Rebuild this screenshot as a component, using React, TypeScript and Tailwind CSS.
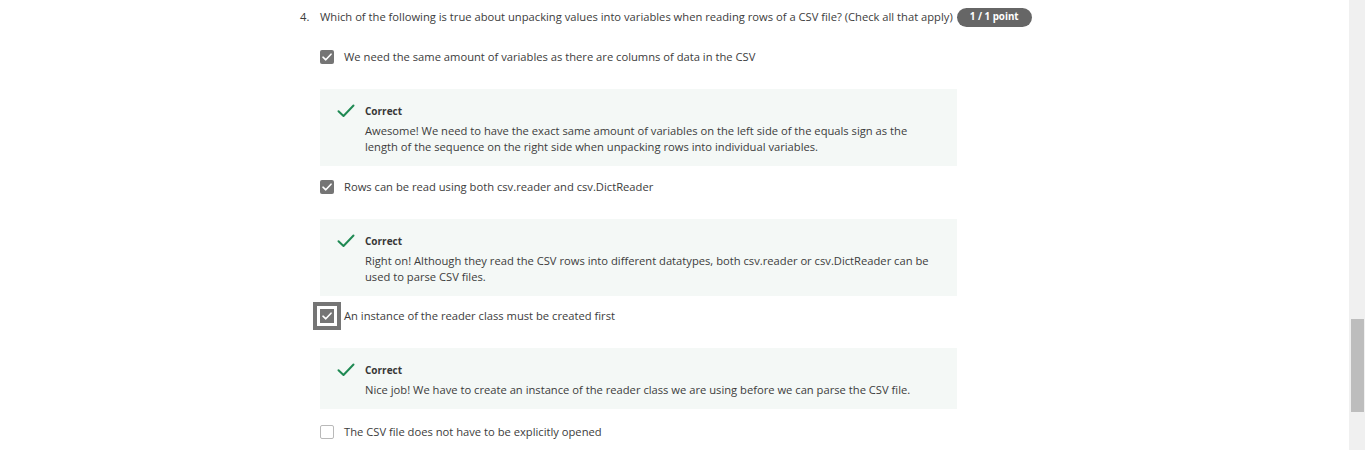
import React from "react";

const options = [
  {
    label: "We need the same amount of variables as there are columns of data in the CSV",
    checked: true,
    feedback: [
      "Awesome! We need to have the exact same amount of variables on the left side of the equals sign as the",
      "length of the sequence on the right side when unpacking rows into individual variables.",
    ],
  },
  {
    label: "Rows can be read using both csv.reader and csv.DictReader",
    checked: true,
    feedback: [
      "Right on! Although they read the CSV rows into different datatypes, both csv.reader or csv.DictReader can be",
      "used to parse CSV files.",
    ],
  },
  {
    label: "An instance of the reader class must be created first",
    checked: true,
    focused: true,
    feedback: [
      "Nice job! We have to create an instance of the reader class we are using before we can parse the CSV file.",
    ],
  },
  {
    label: "The CSV file does not have to be explicitly opened",
    checked: false,
  },
];

const gaps = ["", "mt-[11px]", "mt-[10px]", "mt-[13px]"];

function Checkbox({ checked, focused }: { checked: boolean; focused?: boolean }) {
  if (!checked) {
    return <div className="h-[14px] w-[14px] rounded-[2px] border border-[#b9b9b9] bg-white shrink-0" />;
  }
  return (
    <div
      className={
        "h-[14px] w-[14px] bg-[#757575] flex items-center justify-center shrink-0 " +
        (focused ? "rounded-none shadow-[0_0_0_3px_#fff,0_0_0_7px_#757575]" : "rounded-[2px]")
      }
    >
      <svg width="10" height="8" viewBox="0 0 10 8" fill="none">
        <path d="M1 4.2 L3.8 6.8 L9 1.2" stroke="white" strokeWidth="1.6" strokeLinecap="round" strokeLinejoin="round" />
      </svg>
    </div>
  );
}

function Feedback({ lines }: { lines: string[] }) {
  return (
    <div className="mt-[22px] w-[637px] bg-[#f4f8f6] pt-[14px] pb-[11px] pl-[17px] flex gap-[10px]">
      <svg width="18" height="14" viewBox="0 0 18 14" fill="none" className="mt-[1px] shrink-0">
        <path d="M1.5 7.2 L6.5 12 L16.5 1.5" stroke="#1f8a53" strokeWidth="2" strokeLinecap="round" strokeLinejoin="round" />
      </svg>
      <div>
        <p className="text-[10px] font-bold leading-[16px] text-[#373737]">Correct</p>
        <div className="mt-[4px]">
          {lines.map((l) => (
            <p key={l} className="text-[11.2px] leading-[16px] text-[#3c3c3c]">
              {l}
            </p>
          ))}
        </div>
      </div>
    </div>
  );
}

export default function App() {
  return (
    <div className="h-[450px] w-full flex overflow-hidden bg-white font-['Open_Sans',sans-serif] text-[#3c3c3c]">
      <main className="flex-1 pl-[300px] pt-[8px]">
        {/* Question */}
        <div className="flex items-center h-[19px]">
          <span className="w-[20px] text-[11.2px]">4.</span>
          <span className="text-[11.2px]">
            Which of the following is true about unpacking values into variables when reading rows of a CSV file? (Check all that apply)
          </span>
          <span className="ml-[4px] h-[19px] w-[75px] rounded-full bg-[#666666] text-white text-[9.8px] font-bold flex items-center justify-center">
            1 / 1 point
          </span>
        </div>

        {/* Options */}
        <div className="pl-[20px] pt-[20px]">
          {options.map((o, i) => (
            <div key={o.label} className={gaps[i]}>
              <div className="flex items-center h-[20px] gap-[10px]">
                <Checkbox checked={o.checked} focused={o.focused} />
                <span className="text-[11.2px]">{o.label}</span>
              </div>
              {o.feedback && <Feedback lines={o.feedback} />}
            </div>
          ))}
        </div>
      </main>

      {/* Scrollbar */}
      <div className="w-[16px] h-full bg-[#f0f0f0] pt-[319px] pl-[2px] pr-[1px]">
        <div className="h-[93px] bg-[#bdbdbd]" />
      </div>
    </div>
  );
}
